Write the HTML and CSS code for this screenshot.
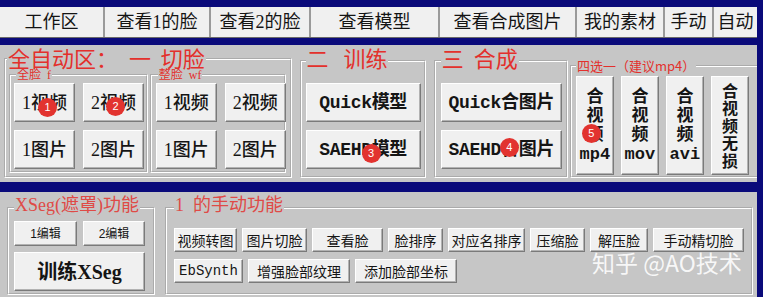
FILE: index.html
```html
<!DOCTYPE html>
<html lang="zh-CN">
<head>
<meta charset="utf-8">
<title>DeepFaceLab 工作区</title>
<link rel="stylesheet" href="styles.css">
</head>
<body>
<div class="app">
  <nav class="tabs">
    <div class="tab t1">工作区</div>
    <div class="tab t2">查看1的脸</div>
    <div class="tab t3">查看2的脸</div>
    <div class="tab t4">查看模型</div>
    <div class="tab t5">查看合成图片</div>
    <div class="tab t6">我的素材</div>
    <div class="tab t7">手动</div>
    <div class="tab t8">自动</div>
  </nav>

  <section class="panel panel-top">
    <fieldset class="group g-cut">
      <legend class="title-lg lg-a">全自动区：　一&nbsp;&nbsp;切脸</legend>
      <div class="subgroups">
        <fieldset class="group sub sub-f">
          <legend class="title-sm">全脸&nbsp;&nbsp;f</legend>
          <div class="grid2">
            <button class="btn big serif">1视频<span class="badge b1">1</span></button>
            <button class="btn big serif">2视频<span class="badge b2">2</span></button>
            <button class="btn big serif">1图片</button>
            <button class="btn big serif">2图片</button>
          </div>
        </fieldset>
        <fieldset class="group sub sub-wf">
          <legend class="title-sm">整脸&nbsp;&nbsp;wf</legend>
          <div class="grid2">
            <button class="btn big serif">1视频</button>
            <button class="btn big serif">2视频</button>
            <button class="btn big serif">1图片</button>
            <button class="btn big serif">2图片</button>
          </div>
        </fieldset>
      </div>
    </fieldset>

    <fieldset class="group g-train">
      <legend class="title-lg lg-b">二&nbsp;&nbsp;&nbsp;训练</legend>
      <div class="col">
        <button class="btn wide mono">Quick模型</button>
        <button class="btn wide mono">SAEHD模型<span class="badge b3">3</span></button>
      </div>
    </fieldset>

    <fieldset class="group g-merge">
      <legend class="title-lg lg-b">三&nbsp;&nbsp;合成</legend>
      <div class="col">
        <button class="btn wide2 mono">Quick合图片</button>
        <button class="btn wide2 mono">SAEHD合图片<span class="badge b4">4</span></button>
      </div>
    </fieldset>

    <fieldset class="group g-pick">
      <legend class="title-xs">四选一（建议mp4）</legend>
      <div class="row-v">
        <button class="btn vert mono">合<br>视<br>频<br>mp4<span class="badge b5">5</span></button>
        <button class="btn vert mono">合<br>视<br>频<br>mov</button>
        <button class="btn vert mono">合<br>视<br>频<br>avi</button>
        <button class="btn vert vert5">合<br>视<br>频<br>无<br>损</button>
      </div>
    </fieldset>
  </section>

  <section class="panel panel-bottom">
    <fieldset class="group g-xseg">
      <legend class="title-md">XSeg(遮罩)功能</legend>
      <div class="xgrid">
        <button class="btn tiny">1编辑</button>
        <button class="btn tiny">2编辑</button>
        <button class="btn train">训练XSeg</button>
      </div>
    </fieldset>

    <fieldset class="group g-manual">
      <legend class="title-md">1&nbsp;&nbsp;的手动功能</legend>
      <div class="mrow">
        <button class="btn small w63">视频转图</button>
        <button class="btn small w65">图片切脸</button>
        <button class="btn small w71">查看脸</button>
        <button class="btn small w55">脸排序</button>
        <button class="btn small w77">对应名排序</button>
        <button class="btn small w55">压缩脸</button>
        <button class="btn small w58">解压脸</button>
        <button class="btn small w91">手动精切脸</button>
      </div>
      <div class="mrow">
        <button class="btn small w69 mono-s">EbSynth</button>
        <button class="btn small w102">增强脸部纹理</button>
        <button class="btn small w102">添加脸部坐标</button>
      </div>
    </fieldset>

    <div class="watermark">知乎 @AO技术</div>
  </section>
</div>
</body>
</html>
```

FILE: styles.css
```css
* { box-sizing: border-box; }
html, body { margin: 0; padding: 0; }
body {
  background: #0a0a7a;
  width: 763px;
  height: 297px;
  overflow: hidden;
  font-family: "Noto Sans CJK SC", sans-serif;
}
.app { width: 757px; padding-top: 7px; }

/* tabs */
.tabs {
  display: flex;
  gap: 2px;
  height: 31px;
  background: #9a9a9a;
  border-bottom: 1px solid #6a6a6a;
}
.tab {
  background: #f0f0f0;
  display: flex;
  align-items: center;
  justify-content: center;
  font: 18px/20px "Liberation Serif", "Noto Sans CJK SC", serif;
  color: #141414;
}
.t1 { width: 103px; } .t2 { width: 104px; } .t3 { width: 98px; } .t4 { width: 127px; }
.t5 { width: 135px; } .t6 { width: 86px; } .t7 { width: 47px; } .t8 { width: 43px; }

/* panels */
.panel { background: #c6c6c6; overflow: hidden; position: relative; }
.panel-top {
  margin-top: 7px;
  height: 137px;
  display: flex;
  align-items: stretch;
  gap: 8px;
  padding: 0 0 4px 4px;
}
.panel-bottom {
  margin-top: 10px;
  height: 105px;
  display: flex;
  align-items: stretch;
  gap: 10px;
  padding: 0 0 2px 7px;
}

/* group boxes */
.group {
  margin: 0;
  padding: 0;
  min-width: 0;
  border: 2px groove #ffffff;
}
legend { padding: 0 1px; color: #e3302c; }
.title-lg { font: 22px/24px "Noto Sans CJK SC", sans-serif; }
.lg-a { padding-bottom: 4px; margin-left: -2px; }
.lg-b { padding-bottom: 8px; }
.title-sm { font: 12px/14px "Liberation Serif", "Noto Sans CJK SC", serif; margin-left: 2px; }
.title-xs { font: 13px/14px "Noto Sans CJK SC", sans-serif; }
.title-md {
  font: 18px/20px "Liberation Serif", "Noto Sans CJK SC", serif;
  color: #df4a46;
  padding-bottom: 6px;
}

.g-cut { width: 292px; padding: 0 4px 3px 3px; }
.subgroups { display: flex; gap: 2px; margin-top: -5px; }
.sub { padding: 1px 0 2px 3px; }
.sub-f { width: 141px; }
.sub-wf { width: 138px; padding-left: 4px; }
.grid2 {
  display: grid;
  grid-template-columns: 61px 61px;
  grid-auto-rows: 39px;
  gap: 8px;
}

.g-train { width: 128px; padding: 6px 5px 0 4px; }
.g-merge { width: 136px; padding: 6px 6px 0 5px; }
.col { display: flex; flex-direction: column; gap: 8px; }

.g-pick {
  width: 190px;
  margin-left: -6px;
  margin-top: 14px;
  padding: 3px 0 0 4px;
  border-right: none;
}
.row-v { display: flex; gap: 7px; }

.g-xseg { width: 148px; margin-top: 3px; padding: 0 8px 2px 5px; }
.xgrid {
  display: grid;
  grid-template-columns: 63px 62px;
  grid-template-rows: 25px 39px;
  gap: 6px;
}
.g-manual { width: 588px; margin-top: 3px; padding: 7px 0 0 7px; }
.mrow { display: flex; gap: 5px; height: 24px; }
.mrow + .mrow { margin-top: 7px; }

/* buttons */
.btn {
  position: relative;
  margin: 0;
  padding: 0;
  background: #f0f0f0;
  border: 1px solid;
  border-color: #ffffff #7a7a7a #7a7a7a #ffffff;
  box-shadow: inset -1px -1px 0 #b2b2b2;
  color: #151515;
  text-align: center;
  white-space: nowrap;
}
.serif { font-family: "Liberation Serif", "Noto Sans CJK SC", serif; }
.mono { font-family: "Liberation Mono", "Noto Sans CJK SC", monospace; }
.big { font-size: 18px; line-height: 20px; font-weight: 500; }
.wide { width: 115px; height: 39px; font-size: 18px; line-height: 20px; font-weight: 700; letter-spacing: -0.3px; }
.wide2 { width: 121px; height: 39px; font-size: 18px; line-height: 20px; font-weight: 700; letter-spacing: -0.3px; }
.vert { width: 38px; height: 99px; font-size: 17px; line-height: 19px; font-weight: 700; }
.vert5 { font: 700 16px/17.5px "Noto Sans CJK SC", sans-serif; }
.tiny { font: 12px/14px "Liberation Sans", "Noto Sans CJK SC", sans-serif; }
.train { grid-column: 1 / 3; font: 700 20px/22px "Liberation Serif", "Noto Sans CJK SC", serif; }
.small { height: 24px; font: 14px/16px "Noto Sans CJK SC", sans-serif; }
.mono-s { font-family: "Liberation Mono", monospace; }
.w55 { width: 55px; } .w58 { width: 58px; } .w63 { width: 63px; } .w65 { width: 65px; }
.w69 { width: 69px; } .w71 { width: 71px; } .w77 { width: 77px; } .w91 { width: 91px; }
.w102 { width: 102px; }

/* numbered markers */
.badge {
  position: absolute;
  width: 19px;
  height: 19px;
  border-radius: 50%;
  background: #e2332f;
  color: #fff;
  font: 11px/19px "Liberation Sans", sans-serif;
  font-weight: 400;
  letter-spacing: 0;
  text-align: center;
}
.b1 { left: 23px; top: 14px; }
.b2 { left: 22px; top: 13px; }
.b3 { left: 55px; top: 13px; }
.b4 { left: 58px; top: 7px; }
.b5 { left: 5px; top: 47px; }

.watermark {
  position: absolute;
  left: 592px;
  top: 56px;
  font: 23px/28px "Noto Sans CJK SC", sans-serif;
  color: rgba(255, 255, 255, 0.88);
  white-space: nowrap;
}
```
